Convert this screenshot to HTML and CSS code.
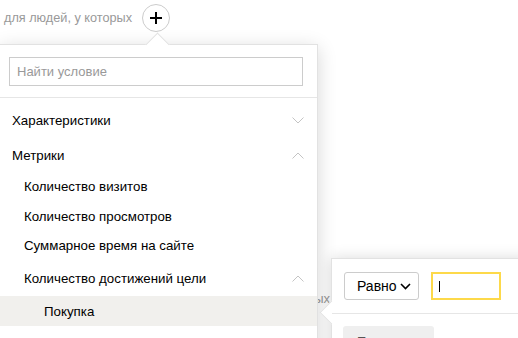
FILE: index.html
```html
<!DOCTYPE html>
<html lang="ru">
<head>
  <meta charset="UTF-8">
  <title>Условия сегмента</title>
  <link rel="stylesheet" href="styles.css">
</head>
<body>
  <div class="page">
    <div class="condition">
      <span class="conditionText">для людей, у которых</span>
      <button class="addButton" type="button">
        <svg width="12" height="12" viewBox="0 0 12 12"><path d="M6 0v12M0 6h12" stroke="#000" stroke-width="2"/></svg>
      </button>
    </div>
    <div class="behind">у посетителей новых</div>

    <div class="menu">
      <div class="menuSearch">
        <input class="searchInput" type="text" placeholder="Найти условие">
      </div>
      <ul class="menuList">
        <li class="group">
          <div class="groupTitle">Характеристики
            <svg class="chevron" width="12" height="7" viewBox="0 0 12 7"><path d="M0.5 0.5l5.5 5.5 5.5-5.5" fill="none" stroke="#c4c4c4"/></svg>
          </div>
        </li>
        <li class="group">
          <div class="groupTitle">Метрики
            <svg class="chevron" width="12" height="7" viewBox="0 0 12 7"><path d="M0.5 6.5l5.5-5.5 5.5 5.5" fill="none" stroke="#c4c4c4"/></svg>
          </div>
          <ul class="subList">
            <li class="subItem">Количество визитов</li>
            <li class="subItem">Количество просмотров</li>
            <li class="subItem">Суммарное время на сайте</li>
            <li class="subItem subGroup">Количество достижений цели
              <svg class="chevron" width="12" height="7" viewBox="0 0 12 7"><path d="M0.5 6.5l5.5-5.5 5.5 5.5" fill="none" stroke="#c4c4c4"/></svg>
            </li>
            <li class="goalList">
              <div class="goalItem is-active">Покупка</div>
            </li>
          </ul>
        </li>
      </ul>
    </div>

    <div class="valuePopup">
      <div class="valueRow">
        <button class="selectButton" type="button">Равно
          <svg width="11" height="7" viewBox="0 0 11 7"><path d="M1 1l4.5 4.5 4.5-4.5" fill="none" stroke="#000" stroke-width="1.6"/></svg>
        </button>
        <div class="valueInput"><span class="caret"></span></div>
      </div>
      <div class="popupFooter">
        <div class="periodTab">Последние</div>
        <div class="iconBox">
          <svg width="8" height="8" viewBox="0 0 8 8"><path d="M4 0h4v3H4zM0 4h4v4H0zM5 5h3v3H5z" fill="#000"/></svg>
        </div>
      </div>
    </div>
  </div>
</body>
</html>
```

FILE: styles.css
```css
* {
  margin: 0;
  padding: 0;
  box-sizing: border-box;
}
body {
  font-family: "Liberation Sans", Arial, sans-serif;
  color: #000;
  background-color: #fff;
}
ul {
  list-style: none;
}
button {
  font-family: inherit;
  cursor: pointer;
}
.page {
  position: relative;
  width: 518px;
  height: 338px;
  overflow: hidden;
}
.condition {
  display: flex;
  align-items: center;
  padding: 4px 0 0 4px;
}
.conditionText {
  font-size: 12.7px;
  color: #999;
}
.addButton {
  display: flex;
  align-items: center;
  justify-content: center;
  width: 28px;
  height: 28px;
  margin-left: 10px;
  border: 1px solid #ccc;
  border-radius: 50%;
  background-color: #fff;
}
.behind {
  width: 330px;
  margin-top: 259px;
  font-size: 13px;
  color: #999;
  text-align: right;
}

/* dropdown with conditions */
.menu {
  position: absolute;
  top: 44px;
  left: 0;
  width: 318px;
  height: 310px;
  background-color: #fff;
  border-top: 1px solid #e2e2e2;
  border-right: 1px solid #e2e2e2;
  box-shadow: 0 4px 18px rgba(0, 0, 0, 0.16);
}
.menu::before {
  content: "";
  position: absolute;
  top: -9px;
  left: 149px;
  width: 16px;
  height: 16px;
  background-color: #fff;
  border-top: 1px solid #e2e2e2;
  border-left: 1px solid #e2e2e2;
  transform: rotate(45deg);
}
.menuSearch {
  position: relative;
  padding: 12px 14px 11px 9px;
  border-bottom: 1px solid #e6e6e6;
}
.searchInput {
  display: block;
  width: 100%;
  height: 29px;
  padding: 0 7px;
  border: 1px solid #ccc;
  font-family: inherit;
  font-size: 13px;
  outline: none;
}
.searchInput::placeholder {
  color: #999;
}
.menuList {
  padding-top: 5px;
  font-size: 13.3px;
}
.groupTitle {
  display: flex;
  align-items: center;
  justify-content: space-between;
  height: 35px;
  padding: 0 13px 0 12px;
}
.group + .group .groupTitle {
  height: 34px;
}
.subItem {
  display: flex;
  align-items: center;
  height: 29.5px;
  padding-left: 24px;
}
.subGroup {
  justify-content: space-between;
  height: 35.5px;
  padding-top: 1px;
  padding-right: 13px;
}
.goalItem {
  display: flex;
  align-items: center;
  height: 30px;
  padding-left: 44px;
}
.goalItem.is-active {
  background-color: #f1f0ed;
}

/* value editor */
.valuePopup {
  position: absolute;
  top: 258px;
  left: 331px;
  width: 200px;
  height: 100px;
  background-color: #fff;
  border-top: 1px solid #e2e2e2;
  border-left: 1px solid #e2e2e2;
  box-shadow: 0 0 14px rgba(0, 0, 0, 0.14);
}
.valuePopup::before {
  content: "";
  position: absolute;
  top: 45px;
  left: -9px;
  width: 16px;
  height: 16px;
  background-color: #fff;
  border-left: 1px solid #e2e2e2;
  border-bottom: 1px solid #e2e2e2;
  transform: rotate(45deg);
}
.valueRow {
  position: relative;
  display: flex;
  align-items: center;
  gap: 12px;
  padding: 13px 12px 13px;
  border-bottom: 1px solid #e6e6e6;
}
.selectButton {
  display: flex;
  align-items: center;
  gap: 3px;
  width: 75px;
  height: 28px;
  padding-left: 12px;
  border: 1px solid #ccc;
  border-radius: 3px;
  background-color: #fff;
  font-size: 14px;
  color: #000;
}
.valueInput {
  display: flex;
  align-items: center;
  width: 70px;
  height: 28px;
  padding-left: 6px;
  border: 2px solid #fdd94a;
}
.caret {
  width: 1px;
  height: 11px;
  background-color: #000;
}
.popupFooter {
  display: flex;
  justify-content: space-between;
  padding: 12px 0 0 11px;
}
.periodTab {
  width: 91px;
  height: 30px;
  padding: 8px 0 0 14px;
  border-radius: 3px;
  background-color: #efefef;
  font-size: 13px;
  color: #555;
}
.iconBox {
  width: 30px;
  height: 30px;
  margin-right: -17px;
  padding: 6px 0 0 6px;
  border: 1px solid #ccc;
  border-radius: 3px;
}
```
